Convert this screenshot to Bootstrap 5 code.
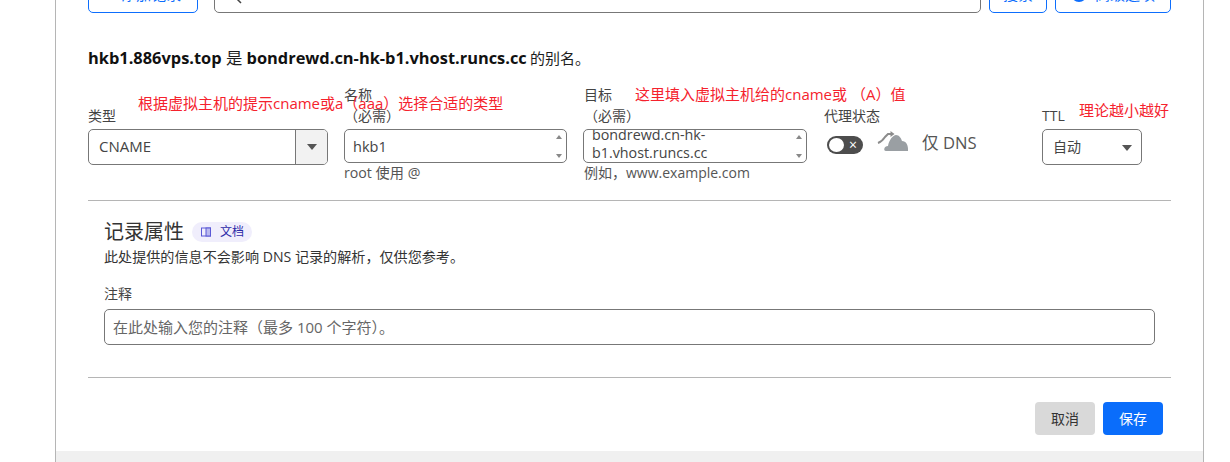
<!DOCTYPE html>
<html lang="zh-CN">
<head>
<meta charset="utf-8">
<title>DNS 记录</title>
<link href="https://cdn.jsdelivr.net/npm/bootstrap@5.3.0/dist/css/bootstrap.min.css" rel="stylesheet">
<style>
html,body{height:462px;overflow:hidden;background:#fff;}
body{font-family:"Open Sans","Noto Sans CJK SC",sans-serif;font-size:14px;color:#333;}
.shell{margin-left:55px;width:1149px;height:462px;border-left:1px solid #b5b5b5;border-right:1px solid #b5b5b5;display:flex;flex-direction:column;overflow:hidden;}
.inner{flex:1;padding:0 32px;min-height:0;}
.foot-strip{height:11px;background:#f0f0f0;flex:none;}
.topclip{height:13px;overflow:hidden;display:flex;align-items:flex-end;gap:8px;}
.topclip>*{height:34px;flex:none;background:#fff;border-radius:5px;overflow:hidden;}
.tb{border:1px solid #0d6efd;color:#0d6efd;display:flex;align-items:flex-end;justify-content:center;gap:8px;padding-bottom:10px;line-height:1;font-size:15px;}
.tb1{width:110px;}
.searchbx{border:1px solid #777;width:767px;margin-left:8px;padding:0 0 8px 9px;display:flex;align-items:flex-end;}
.tb2{width:58px;}
.tb3{width:116px;}
.alias{margin:33px 0 0;font-size:16.4px;line-height:24px;color:#1d1d1d;}
.alias b{font-weight:700;color:#111;}
.alias .cjkm{font-size:16.4px;}
.alias .cjke{font-size:15px;margin-left:-1px;}
.fieldrow{position:relative;height:115px;margin-top:15px;}
.colfld{flex:none;}
.w-type{width:240px;}
.w-name{width:223px;}
.w-target{width:224px;}
.w-proxy{width:203px;}
.w-ttl{width:100px;}
.lblbox{height:44px;padding-bottom:3px;display:flex;flex-direction:column;justify-content:flex-end;font-size:14px;line-height:21px;color:#444;white-space:nowrap;}
.pad1{padding-left:1px;}
.note{position:absolute;color:#f5222d;font-size:15px;line-height:20px;white-space:nowrap;}
.note-a{left:50px;top:8px;}
.note-b{left:547px;top:-1px;}
.note-c{left:991px;top:15px;}
.ctl{position:relative;border:1px solid #777;border-radius:5px;background:#fff;color:#444;display:flex;align-items:center;}
.hint{font-size:14.2px;line-height:20px;color:#555;white-space:nowrap;}
.hint-ex{font-size:14px;}
.typebox{height:36px;padding:0 0 1px 10px;font-size:15px;}
.caretcell{position:absolute;right:0;top:0;bottom:0;width:32px;background:#f2f2f2;border-left:1px solid #777;border-radius:0 4px 4px 0;display:flex;align-items:center;justify-content:center;}
.tri{width:0;height:0;border-left:5px solid transparent;border-right:5px solid transparent;border-top:6px solid #555;}
.spin{position:absolute;right:4px;top:5px;bottom:4px;display:flex;flex-direction:column;justify-content:space-between;align-items:center;}
.spin i{display:block;width:0;height:0;border-left:3.5px solid transparent;border-right:3.5px solid transparent;}
.spin i:first-child{border-bottom:4px solid #888;}
.spin i:last-child{border-top:4px solid #888;}
.namebox{height:34px;padding:2px 0 0 8px;font-size:14.5px;}
.targetbox{height:34px;overflow:hidden;font-size:14.3px;align-items:flex-end;padding:0 0 0 8px;line-height:18px;}
.proxyrow{display:flex;align-items:flex-start;height:34px;padding-left:4px;}
.sw{width:36px;height:18px;margin-top:7px;border-radius:9px;background:#4d4d4d;display:flex;align-items:center;justify-content:space-between;padding:0 6px 0 2px;flex:none;}
.knob{width:15px;height:14px;border-radius:50%;background:#fff;}
.swx{color:#fff;font-size:14px;line-height:1;}
.cloudic{margin:1px 0 0 14px;flex:none;}
.dnsonly{margin:2px 0 0 13px;font-size:16.6px;line-height:24px;color:#555;white-space:nowrap;}
.ttlbox{height:36px;padding:0 0 2px 10px;font-size:14px;}
.ttlbox .tri{position:absolute;right:9px;top:15px;}
.divline{border:0;border-top:1px solid #b5b5b5;opacity:1;margin:0;}
.attrs{padding:0 16px;}
.attrhead{display:flex;align-items:center;gap:8px;margin-top:18px;height:26px;}
.attrhead h2{font-size:20px;font-weight:400;margin:0;color:#333;line-height:26px;}
.docpill{display:inline-flex;align-items:center;gap:8px;height:20px;padding:0 8px;background:#f0eefc;border-radius:10px;color:#2c2aa8;font-size:12px;}
.attrsub{font-size:14.1px;line-height:20px;margin:2px 0 0;color:#333;}
.cmtlabel{font-size:14px;line-height:18px;margin:18px 0 6px;color:#444;}
.cmtinput{height:36px;border:1px solid #777;border-radius:5px;padding:0 8px;font-size:15px;background:#fff;}
.cmtinput::placeholder{color:#666;opacity:1;}
.actions{display:flex;justify-content:flex-end;gap:8px;padding:24px 8px 0 0;}
.bcancel,.bsave{width:60px;height:33px;padding:0;font-size:14px;border-radius:4px;border:0;}
.bcancel{background:#d9d9d9;color:#333;}
.bsave{background:#0a6dfb;color:#fff;}
</style>
</head>
<body>
<div class="shell">
  <div class="inner">
    <div class="topclip">
      <div class="tb tb1"><span>+</span><span>添加记录</span></div>
      <div class="searchbx"><svg width="18" height="18" viewBox="0 0 18 18" aria-hidden="true"><circle cx="7" cy="7" r="5.500" fill="none" stroke="#444" stroke-width="1.500"/><path d="M11 11 L17 17" stroke="#444" stroke-width="1.500"/></svg></div>
      <div class="tb tb2"><span>搜索</span></div>
      <div class="tb tb3"><svg width="16" height="16" viewBox="0 0 16 16" aria-hidden="true"><circle cx="8" cy="8" r="8" fill="#0d6efd"/></svg><span>高级选项</span></div>
    </div>
    <p class="alias"><b>hkb1.886vps.top</b> <span class="cjkm">是</span> <b>bondrewd.cn-hk-b1.vhost.runcs.cc</b> <span class="cjke">的别名。</span></p>
    <div class="fieldrow d-flex gap-3">
      <div class="colfld w-type">
        <div class="lblbox"><span>类型</span></div>
        <div class="ctl typebox">CNAME<div class="caretcell"><div class="tri"></div></div></div>
      </div>
      <div class="colfld w-name">
        <div class="lblbox"><span>名称</span><span>（必需）</span></div>
        <div class="ctl namebox">hkb1<div class="spin"><i></i><i></i></div></div>
        <div class="hint">root 使用 @</div>
      </div>
      <div class="colfld w-target">
        <div class="lblbox pad1"><span>目标</span><span>（必需）</span></div>
        <div class="ctl targetbox"><span>bondrewd.cn-hk-<br>b1.vhost.runcs.cc</span><div class="spin"><i></i><i></i></div></div>
        <div class="hint hint-ex pad1">例如，www.example.com</div>
      </div>
      <div class="colfld w-proxy">
        <div class="lblbox pad1"><span>代理状态</span></div>
        <div class="proxyrow">
          <div class="sw"><div class="knob"></div><div class="swx">×</div></div>
          <svg class="cloudic" width="32" height="24" viewBox="0 0 32 24" aria-hidden="true"><path d="M1 13 C4 12 6 10 8 7 L11 4 L15 4" fill="none" stroke="#8c8c8c" stroke-width="2"/><path d="M13.500 1 L17.500 4 L13.500 7Z" fill="#8c8c8c"/><path d="M9 21 C6 21 7 16 11 16 C12 10 16 5 19 5 C22 5 24 8 25 11 C29 11 31.500 15 31 21 Z" fill="#9a9fa3"/></svg>
          <div class="dnsonly">仅 DNS</div>
        </div>
      </div>
      <div class="colfld w-ttl">
        <div class="lblbox"><span>TTL</span></div>
        <div class="ctl ttlbox">自动<div class="tri"></div></div>
      </div>
      <div class="note note-a">根据虚拟主机的提示cname或a（aaa）选择合适的类型</div>
      <div class="note note-b">这里填入虚拟主机给的cname或 （A）值</div>
      <div class="note note-c">理论越小越好</div>
    </div>
    <hr class="divline">
    <div class="attrs">
      <div class="attrhead"><h2>记录属性</h2><span class="docpill"><svg width="12" height="12" viewBox="0 0 12 12" aria-hidden="true"><rect x="1.500" y="2" width="9" height="8" fill="none" stroke="#5a58d6"/><rect x="6" y="2" width="4.500" height="8" fill="#b9b8ee" stroke="#5a58d6"/></svg>文档</span></div>
      <p class="attrsub">此处提供的信息不会影响 DNS 记录的解析，仅供您参考。</p>
      <div class="cmtlabel">注释</div>
      <input class="form-control cmtinput" type="text" placeholder="在此处输入您的注释（最多 100 个字符）。">
    </div>
    <hr class="divline" style="margin-top:32px">
    <div class="actions">
      <button type="button" class="btn bcancel">取消</button>
      <button type="button" class="btn bsave">保存</button>
    </div>
  </div>
  <div class="foot-strip"></div>
</div>
<script src="https://cdn.jsdelivr.net/npm/bootstrap@5.3.0/dist/js/bootstrap.bundle.min.js"></script>
</body>
</html>
